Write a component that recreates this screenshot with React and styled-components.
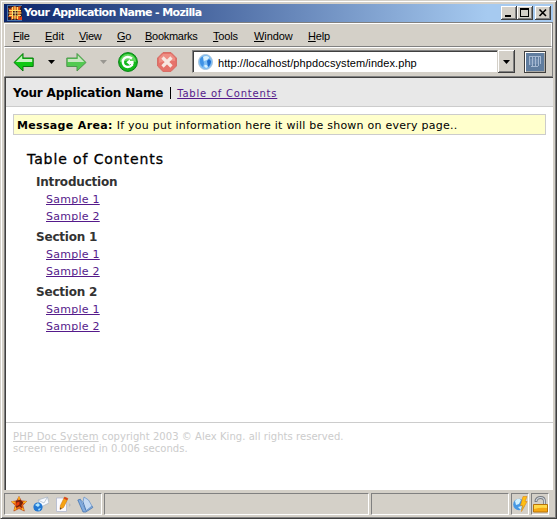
import React from 'react';
import styled, { createGlobalStyle } from 'styled-components';

const Global = createGlobalStyle`
  * { box-sizing: border-box; }
  body { margin: 0; overflow: hidden; background: #d4d0c8; }
`;
const verdana = `'DejaVu Sans', Verdana, sans-serif`;
const tahoma = `'Liberation Sans', Tahoma, sans-serif`;

const Window = styled.div`
  width: 557px; height: 519px; display: flex; flex-direction: column;
  background: #d4d0c8; padding: 2px; border: 1px solid;
  border-color: #d4d0c8 #404040 #404040 #d4d0c8;
  box-shadow: inset 1px 1px #fff, inset -1px -1px #808080;
  font-family: ${tahoma}; color: #000;
`;
const TitleBar = styled.header`
  height: 18px; margin: 1px 1px 0; display: flex; align-items: center; padding: 0 2px 0 3px; flex: none;
  background: linear-gradient(90deg, #0a246a 0%, #a6caf0 88%);
`;
const Title = styled.h1`
  margin: 0 auto 0 2px; font: bold 11px/18px ${verdana}; letter-spacing: -.63px;
  color: #fff; white-space: nowrap;
`;
const CaptionButton = styled.button`
  width: 16px; height: 14px; padding: 0; border: 0; background: #d4d0c8; display: block;
  margin-left: ${p => p.$gap || 0}px;
  box-shadow: inset -1px -1px #404040, inset 1px 1px #fff, inset -2px -2px #808080;
  svg { display: block; }
`;
const Chrome = styled.div`
  margin: 0 1px; flex: none; border-top: 1px solid #808080; border-right: 1px solid #808080;
`;
const MenuBar = styled.nav`
  height: 24px; display: flex; align-items: center; padding: 1px 0 0 8px;
  border: 1px solid #fff; border-bottom-color: #808080;
`;
const MenuItem = styled.span`
  width: ${p => p.$w}px; font-size: 11px; line-height: 20px; letter-spacing: ${p => p.$track || 0}px; white-space: nowrap;
  &::first-letter { text-decoration: underline; }
`;
const Toolbar = styled.div`
  height: 30px; display: flex; align-items: center; padding: 0 0 1px 8px;
  border-top: 1px solid #fff; border-bottom: 1px solid #808080; border-left: 1px solid #fff;
  & > svg { flex: none; }
`;
const Slot = styled.span`
  width: ${p => p.$w}px; flex: none; display: flex; align-items: center;
`;
const Address = styled.div`
  width: 306px; height: 23px; flex: none; background: #fff; display: flex; align-items: center; padding-left: 5px;
  border: 1px solid; border-color: #808080 #d4d0c8 #d4d0c8 #808080;
  box-shadow: inset 1px 1px #404040;
  font-size: 11px; letter-spacing: .08px;
  span { margin: 2px 0 0 5px; }
`;
const DropButton = styled.button`
  width: 17px; height: 23px; flex: none; padding: 0 0 0 5px; border: 0; background: #d4d0c8;
  box-shadow: inset -1px -1px #404040, inset 1px 1px #fff, inset -2px -2px #808080;
  svg { display: block; }
`;
const Page = styled.main`
  flex: 1; margin: 0 1px; border-left: 1px solid #808080; border-top: 1px solid #404040;
  background: #fff; font-family: ${verdana}; min-height: 0;
  display: flex; flex-direction: column; box-shadow: inset 1px 0 #404040; padding-left: 1px;
`;
const AppBar = styled.div`
  height: 29px; flex: none; background: #e8e8e8; border-bottom: 1px solid #ccc;
  padding: 1px 0 0 7px; display: flex; align-items: baseline; line-height: 29px; white-space: nowrap;
`;
const AppName = styled.strong`
  font-size: 12px; letter-spacing: -.18px;
`;
const Divider = styled.span`
  width: 1px; height: 12px; background: #000; margin: 0 6px 0 7px; align-self: center;
`;
const Link = styled.a`
  color: #551a8b; text-decoration: underline; font-size: ${p => p.$size || 11}px;
  letter-spacing: ${p => p.$track || 0}px; text-underline-offset: 1px; text-decoration-thickness: 1px; text-decoration-skip-ink: none;
`;
const Message = styled.p`
  margin: 7px 7px 0; height: 21px; flex: none; border: 1px solid #ccc; background: #ffc;
  padding-left: 3px; font-size: 11px; line-height: 21px; white-space: nowrap;
  display: flex; letter-spacing: .24px;
  strong { margin-right: 4px; letter-spacing: .34px; }
`;
const Contents = styled.section`
  padding: 15px 0 0 21px; flex: 1;
`;
const ContentsTitle = styled.h2`
  margin: 0 0 7px; font: 500 14px/18px ${verdana}; letter-spacing: .9px; -webkit-text-stroke: .3px #000;
`;
const Group = styled.div`
  margin: 0 0 5px 9px; display: flex; flex-direction: column; height: 50px;
`;
const GroupTitle = styled.h3`
  margin: 0 0 1px; font: bold 12px/15px ${verdana}; letter-spacing: -.2px; color: #333;
`;
const GroupItem = styled.div`
  padding-left: 10px; height: 17px; line-height: 17px; font-size: 11px; display: flex;
`;
const Footer = styled.footer`
  height: 68px; flex: none; border-top: 1px solid #ccc; padding: 8px 7px; color: #ccc;
  font-size: 10px; line-height: 12px; white-space: nowrap; letter-spacing: .05px;
  u { letter-spacing: .22px; text-decoration-thickness: 1px; text-decoration-skip-ink: none; text-underline-offset: 1px; }
`;
const StatusBar = styled.footer`
  height: 26px; flex: none; display: flex; align-items: center; padding: 2px 0 0 1px; gap: 2px;
`;
const Panel = styled.div`
  width: ${p => p.$w}px; height: 22px; display: flex; align-items: center; flex: none;
  padding-left: ${p => p.$pad || 0}px; gap: 6px;
  border: 1px solid; border-color: #808080 #fff #fff #808080;
  svg { flex: none; display: block; }
`;

const Logo = () => (
  <svg width="15" height="16" viewBox="0 0 15 16">
    <path d="M0 0h15v16H0z" fill="#4673ac" /><path d="M1 1h14v14H1z" fill="#251a30" />
    <path d="M3 1l1 3-3-1 2 5-2 4 3 0v3l4-2 4 2 2-1-1-3 1-4-1-3 1-3-4 1-3-1-3 2z" fill="#d5541a" />
    <path d="M5.500 2v12M8 1.500v13M10.500 2v12M2 5.500h12M1.500 8h13M2 10.500h12" stroke="#ffdc62" strokeWidth="1.200" />
    <path d="M6 6h4.500v4.500H6z" fill="#34100c" /><path d="M8.200 5v6M5 8h6" stroke="#ffe58c" strokeWidth=".9" />
    <path d="M10 15h5v-4z" fill="#e34418" />
  </svg>
);
const Arrow = ({ forward }) => (
  <svg width="21" height="20" viewBox="0 0 21 20" opacity={forward ? .65 : 1}>
    <g transform={forward ? 'translate(21 0) scale(-1 1)' : undefined}>
      <path d="M1 10.500L10 1.500v4.500h10.200v8.500H10V19z" fill="#0fc812" stroke="#08780d" />
      <path d="M2.800 10L9.200 3.600V7h10v3z" fill="#c6f3bf" />
    </g>
  </svg>
);
const Caret = ({ color = '#000' }) => <svg width="7" height="4" viewBox="0 0 7 4"><path d="M0 0h7L3.500 4z" fill={color} /></svg>;
const Reload = () => (
  <svg width="20" height="20" viewBox="0 0 20 20">
    <circle cx="10" cy="10" r="9.400" fill="#13b91b" stroke="#078017" />
    <path d="M2 10a8 8 0 0 1 16 0q-8-3-16 0z" fill="#66d761" />
    <path d="M14 6.400Q12 5 9.800 5a5 5 0 0 0 0 10q2.500 0 4.200-2v-2.500h-2" fill="none" stroke="#fff" strokeWidth="2.500" />
    <path d="M8.300 10.300l3.700-3v6z" fill="#fff" /><path d="M11 9h4.500v3H11z" fill="#fff" />
  </svg>
);
const Stop = () => (
  <svg width="20" height="20" viewBox="0 0 20 20">
    <path d="M6 .6h8L19.400 6v8L14 19.400H6L.6 14V6z" fill="#e6736b" stroke="#d66b63" />
    <path d="M6 2h8l4 4v3Q8 8 2 11V6z" fill="#ee8e84" />
    <path d="M5.500 5.500l9 9M14.500 5.500l-9 9" stroke="#f7e7e1" strokeWidth="3.200" />
  </svg>
);
const Globe = () => (
  <svg width="15" height="16" viewBox="0 0 15 16">
    <ellipse cx="7.500" cy="8" rx="7" ry="7.500" fill="#7dbdf4" stroke="#a6c4de" />
    <path d="M2 5q2-3 4-2l-1 3 1 3-1 4Q1 10 2 5z" fill="#3f92e6" />
    <path d="M9 7l2-2 2 2q0 4-3 6z" fill="#1e6fd0" />
    <path d="M5 3q3-2 6 0v1L9 6 6 7zM6 12q2-3 4 1l-2 1z" fill="#d9f2ff" />
  </svg>
);
const Throbber = () => (
  <svg width="22" height="22" viewBox="0 0 22 22">
    <path d="M0 0h22v22H0z" fill="#404040" /><path d="M1 1h20v20H1z" fill="#fff" />
    <path d="M2 2h19v19H2z" fill="#a9a9a5" /><path d="M2 2h18v18H2z" fill="#607d9f" />
    <path d="M5.500 5v9M8.500 5v11M11.500 5v11M14.500 5v10M16.500 5v8M5 5.500h12M7 15.500h7" fill="none" stroke="#a6b9d2" />
    <path d="M7 8v6M10 7v6M13 8v5" stroke="#829dbf" fill="none" />
  </svg>
);
const Star = () => (
  <svg width="16" height="16" viewBox="0 0 17 17">
    <path d="M8.500.5l2.400 4.600 5.600.6-4 4.300 1.700 6-5.700-2.700L3 16l1.500-6L.5 6l5.600-.8z" fill="#ee6813" stroke="#b64312" strokeWidth=".7" />
    <path d="M5 5l5-1 3 3-2 3 1 3-3-2-4 2 1-4z" fill="#75200a" /><path d="M6 7l3-1v3l-3 2z" fill="#ec3d0d" />
    <path d="M8.500 1v3M1 6l3 1M16 6l-3 1M4 15l1-3M13 15l-1-2" stroke="#ffc022" strokeWidth="1.400" />
  </svg>
);
const Mail = () => (
  <svg width="16" height="16" viewBox="0 0 16 16">
    <path d="M5 4l9.500-3L16 7 8 11z" fill="#f7faff" stroke="#a5b3c4" strokeWidth=".7" /><path d="M5 4l6 3 3.500-6" fill="none" stroke="#a5b3c4" strokeWidth=".7" />
    <circle cx="5" cy="11" r="4.600" fill="#2378d3" /><path d="M2 9l3-2 2 2-2 2zM5 13l3-1-2 3z" fill="#afe6ff" />
  </svg>
);
const Compose = () => (
  <svg width="16" height="17" viewBox="0 0 16 17">
    <path d="M14 7l2 2-2 2z" fill="#bbb" /><path d="M1.500 2h10v13.500h-10z" fill="#fafaff" stroke="#b0b8ce" strokeWidth=".8" />
    <path d="M9.500 1L13 2.500 8.500 11.500l-3.500 2 .4-4z" fill="#f6a312" stroke="#d5790f" strokeWidth=".6" /><path d="M9.500 1L13 2.500l-1 1.700-3.300-1.700z" fill="#d63f27" /><path d="M5 13.500l.2-2 1.500.8z" fill="#43372f" />
  </svg>
);
const Book = () => (
  <svg width="17" height="17" viewBox="0 0 17 17">
    <path d="M.8 4l2.500-.8L9 14l6-4 .8 1.500-7 4.500H6z" fill="#83ade0" stroke="#396baa" strokeWidth=".7" />
    <path d="M3.500 4L6 6l1-5 4.500 3L15 10l-6 4.800z" fill="#c5daf3" stroke="#6d97ca" strokeWidth=".8" /><path d="M6 6l3 8.500" stroke="#4f7bb4" />
  </svg>
);
const Online = () => (
  <svg width="15" height="16" viewBox="0 0 15 16">
    <circle cx="6" cy="8.500" r="5.800" fill="#4698e4" /><path d="M2 5q3-4 6-1L6 8 3 9zM5 11l4-1-1 4z" fill="#d1f1ff" />
    <path d="M10 .5h4l-2 5h2L8.500 15.500l1-6H7.500z" fill="#ffbf13" stroke="#df8711" strokeWidth=".6" />
  </svg>
);
const Lock = () => (
  <svg width="15" height="17" viewBox="0 0 15 17">
    <path d="M3 6V4.500q1-3 4.500-3 4 0 4 4v4" fill="none" stroke="#777a80" strokeWidth="2.800" /><path d="M3 5q1-3.500 4.500-3.500 4 0 4 4v4" fill="none" stroke="#d1d8df" strokeWidth="1.200" />
    <path d="M.5 8.500h14v7.500H.5z" fill="#f6a812" stroke="#b87308" /><path d="M1 9h13v3Q8 11 1 13z" fill="#ffd94a" />
  </svg>
);
const CaptionGlyph = ({ d, fill }) => (
  <svg width="16" height="14" viewBox="0 0 16 14"><path d={d} fillRule="evenodd" fill={fill ? '#000' : 'none'} stroke={fill ? 'none' : '#000'} strokeWidth="1.600" /></svg>
);

const menus = [['File', 32, -.3], ['Edit', 34, 0], ['View', 38, -.3], ['Go', 28, -.3], ['Bookmarks', 68, -.28], ['Tools', 41, -.2], ['Window', 54, -.1], ['Help', 30, -.2]];
const groups = ['Introduction', 'Section 1', 'Section 2'];

export default function App() {
  return (
    <Window>
      <Global />
      <TitleBar>
        <Logo />
        <Title>Your Application Name - Mozilla</Title>
        <CaptionButton><CaptionGlyph fill d="M4 9h6v2H4z" /></CaptionButton>
        <CaptionButton><CaptionGlyph fill d="M3 2h9v9H3zM4 4v6h7V4z" /></CaptionButton>
        <CaptionButton $gap={2}><CaptionGlyph d="M4.500 3.500l6.500 6.500M11 3.500l-6.500 6.500" /></CaptionButton>
      </TitleBar>
      <Chrome>
        <MenuBar>{menus.map(([t, w, k]) => <MenuItem key={t} $w={w} $track={k}>{t}</MenuItem>)}</MenuBar>
        <Toolbar>
          <Slot $w={35}><Arrow /></Slot>
          <Slot $w={18}><Caret /></Slot>
          <Slot $w={34}><Arrow forward /></Slot>
          <Slot $w={18}><Caret color="#999791" /></Slot>
          <Slot $w={39}><Reload /></Slot>
          <Slot $w={35}><Stop /></Slot>
          <Address><Globe /><span>http://localhost/phpdocsystem/index.php</span></Address>
          <DropButton><Caret /></DropButton>
          <Slot $w={9} />
          <Throbber />
        </Toolbar>
      </Chrome>
      <Page>
        <AppBar>
          <AppName>Your Application Name</AppName><Divider />
          <Link $size={10} $track={.78}>Table of Contents</Link>
        </AppBar>
        <Message><strong>Message Area:</strong>If you put information here it will be shown on every page..</Message>
        <Contents>
          <ContentsTitle>Table of Contents</ContentsTitle>
          {groups.map(g => (
            <Group key={g}>
              <GroupTitle>{g}</GroupTitle>
              <GroupItem><Link $track={.25}>Sample 1</Link></GroupItem>
              <GroupItem><Link $track={.25}>Sample 2</Link></GroupItem>
            </Group>
          ))}
        </Contents>
        <Footer><u>PHP Doc System</u> copyright 2003 © Alex King. all rights reserved.<br />screen rendered in 0.006 seconds.</Footer>
      </Page>
      <StatusBar>
        <Panel $w={98} $pad={6}><Star /><Mail /><Compose /><Book /></Panel>
        <Panel $w={265} />
        <Panel $w={138} />
        <Panel $w={18} $pad={1}><Online /></Panel>
        <Panel $w={18} $pad={1}><Lock /></Panel>
      </StatusBar>
    </Window>
  );
}
